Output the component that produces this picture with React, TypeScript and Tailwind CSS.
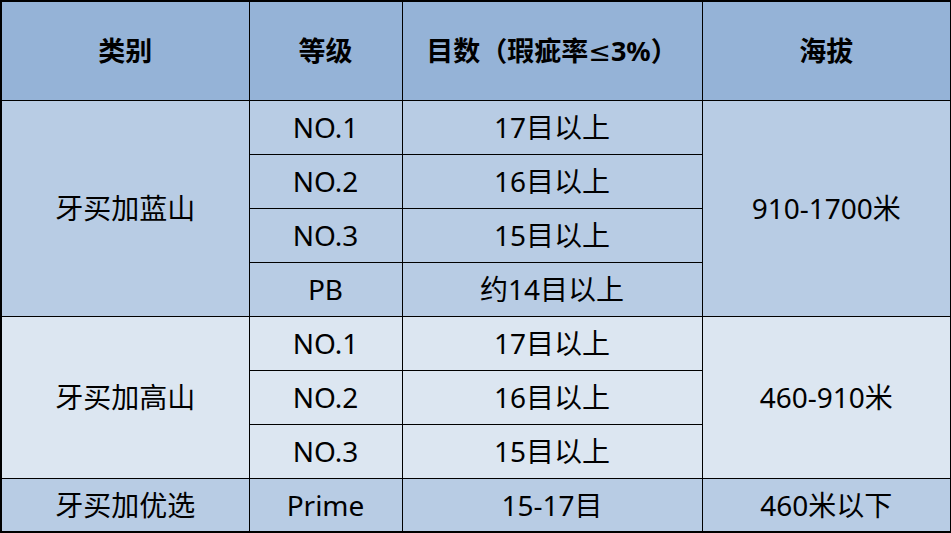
const font = { fontFamily: '"Noto Sans", "Noto Sans CJK SC", sans-serif' }

type Row = { grade: string; mesh: string }

const groups: { name: string; altitude: string; bg: string; rows: Row[] }[] = [
  {
    name: '牙买加蓝山',
    altitude: '910-1700米',
    bg: 'bg-[#b8cce4]',
    rows: [
      { grade: 'NO.1', mesh: '17目以上' },
      { grade: 'NO.2', mesh: '16目以上' },
      { grade: 'NO.3', mesh: '15目以上' },
      { grade: 'PB', mesh: '约14目以上' },
    ],
  },
  {
    name: '牙买加高山',
    altitude: '460-910米',
    bg: 'bg-[#dce6f1]',
    rows: [
      { grade: 'NO.1', mesh: '17目以上' },
      { grade: 'NO.2', mesh: '16目以上' },
      { grade: 'NO.3', mesh: '15目以上' },
    ],
  },
  {
    name: '牙买加优选',
    altitude: '460米以下',
    bg: 'bg-[#b8cce4]',
    rows: [{ grade: 'Prime', mesh: '15-17目' }],
  },
]

const cell = 'border border-black text-center align-middle p-0 whitespace-nowrap'

export default function App() {
  return (
    <div className="w-[951px] h-[533px] bg-white" style={font}>
      <table className="w-[950px] table-fixed border-collapse border-2 border-black text-[28px] leading-[1.3] text-black">
        <colgroup>
          <col className="w-[248px]" />
          <col className="w-[153px]" />
          <col className="w-[300px]" />
          <col className="w-[249px]" />
        </colgroup>
        <thead>
          <tr className="h-[99px] bg-[#95b3d7] font-bold text-[27px]">
            <th className={cell}>类别</th>
            <th className={cell}>等级</th>
            <th className={cell}>
              目数（瑕疵率<span className="font-['DejaVu_Sans'] font-normal">≤</span>3%）
            </th>
            <th className={cell}>海拔</th>
          </tr>
        </thead>
        <tbody>
          {groups.map((g) =>
            g.rows.map((r, i) => (
              <tr key={g.name + i} className={`h-[54px] ${g.bg}`}>
                {i === 0 && (
                  <td rowSpan={g.rows.length} className={cell}>
                    {g.name}
                  </td>
                )}
                <td className={cell}>{r.grade}</td>
                <td className={cell}>{r.mesh}</td>
                {i === 0 && (
                  <td rowSpan={g.rows.length} className={cell}>
                    {g.altitude}
                  </td>
                )}
              </tr>
            ))
          )}
        </tbody>
      </table>
    </div>
  )
}
